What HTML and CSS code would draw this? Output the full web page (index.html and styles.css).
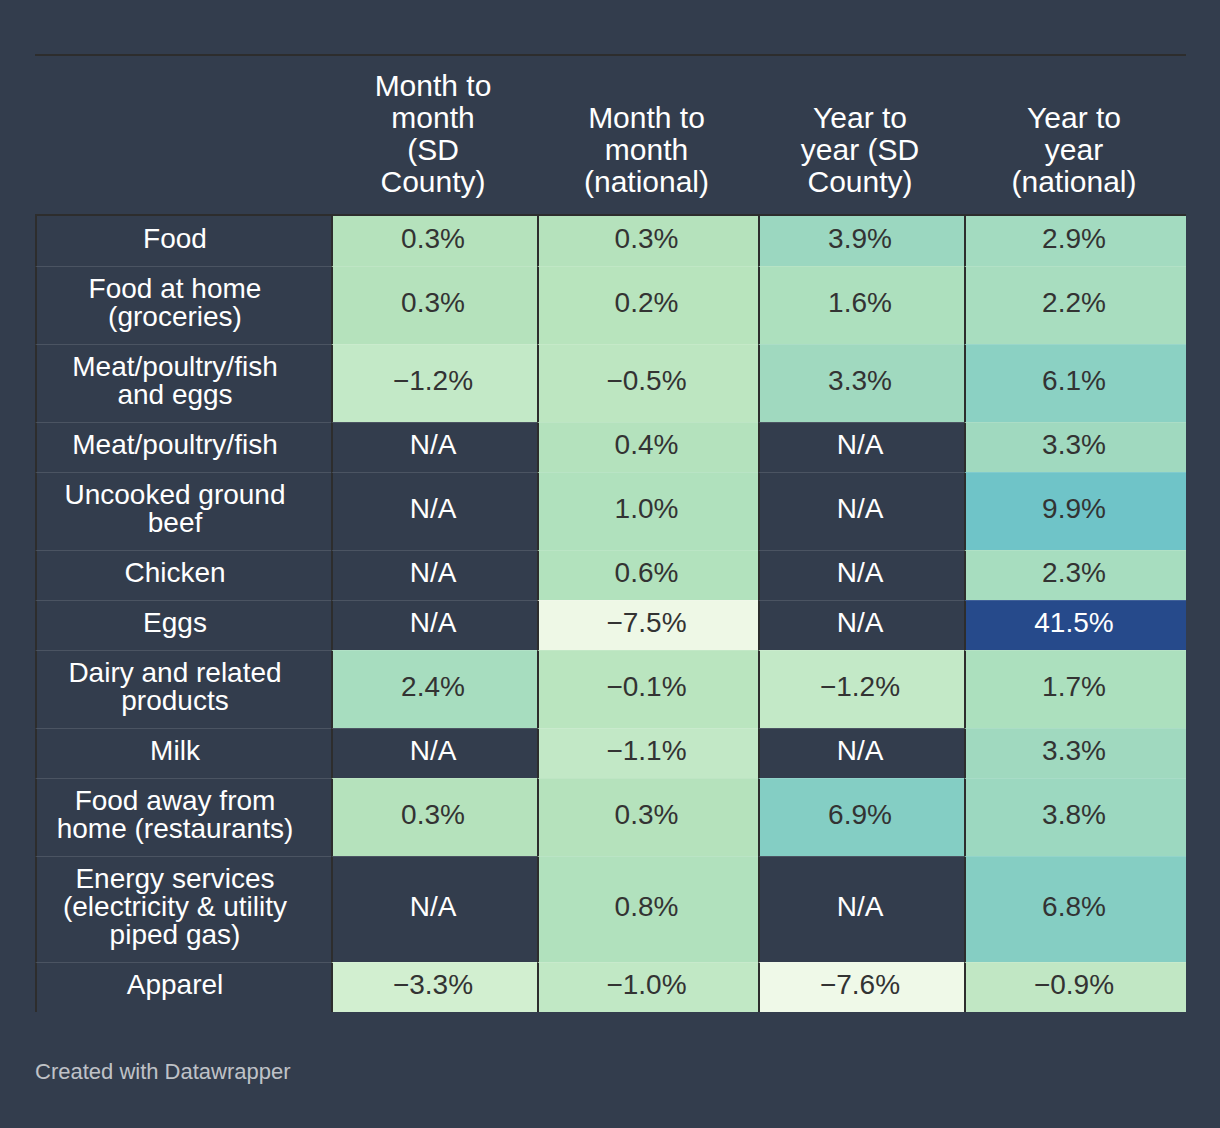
FILE: index.html
```html
<!DOCTYPE html>
<html lang="en">
<head>
<meta charset="utf-8">
<title>Price changes</title>
<link rel="stylesheet" href="styles.css">
</head>
<body>
<div class="chart">
  <div class="grid">
    <div class="row head">
      <div class="hcell"></div>
      <div class="hcell">Month to month (SD County)</div>
      <div class="hcell">Month to month (national)</div>
      <div class="hcell">Year to year (SD County)</div>
      <div class="hcell">Year to year (national)</div>
    </div>
    <div class="row first">
      <div class="cell label">Food</div>
      <div class="cell" style="background-color:#b5e2bc">0.3%</div>
      <div class="cell" style="background-color:#b5e2bc">0.3%</div>
      <div class="cell" style="background-color:#9bd7c0">3.9%</div>
      <div class="cell" style="background-color:#a3dbc0">2.9%</div>
    </div>
    <div class="row">
      <div class="cell label">Food at home (groceries)</div>
      <div class="cell" style="background-color:#b5e2bc">0.3%</div>
      <div class="cell" style="background-color:#b8e4bd">0.2%</div>
      <div class="cell" style="background-color:#ade0be">1.6%</div>
      <div class="cell" style="background-color:#a8ddbf">2.2%</div>
    </div>
    <div class="row">
      <div class="cell label">Meat/poultry/fish and eggs</div>
      <div class="cell" style="background-color:#c3e9c7">−1.2%</div>
      <div class="cell" style="background-color:#bde6c1">−0.5%</div>
      <div class="cell" style="background-color:#a0d9bf">3.3%</div>
      <div class="cell" style="background-color:#8bd1c3">6.1%</div>
    </div>
    <div class="row">
      <div class="cell label">Meat/poultry/fish</div>
      <div class="cell na">N/A</div>
      <div class="cell" style="background-color:#b4e2bd">0.4%</div>
      <div class="cell na">N/A</div>
      <div class="cell" style="background-color:#a0d9bf">3.3%</div>
    </div>
    <div class="row">
      <div class="cell label">Uncooked ground beef</div>
      <div class="cell na">N/A</div>
      <div class="cell" style="background-color:#b0e1bd">1.0%</div>
      <div class="cell na">N/A</div>
      <div class="cell" style="background-color:#6fc4c8">9.9%</div>
    </div>
    <div class="row">
      <div class="cell label">Chicken</div>
      <div class="cell na">N/A</div>
      <div class="cell" style="background-color:#b2e2bd">0.6%</div>
      <div class="cell na">N/A</div>
      <div class="cell" style="background-color:#a7ddbf">2.3%</div>
    </div>
    <div class="row">
      <div class="cell label">Eggs</div>
      <div class="cell na">N/A</div>
      <div class="cell" style="background-color:#eef8e6">−7.5%</div>
      <div class="cell na">N/A</div>
      <div class="cell inv" style="background-color:#264a8b">41.5%</div>
    </div>
    <div class="row">
      <div class="cell label">Dairy and related products</div>
      <div class="cell" style="background-color:#a7ddbf">2.4%</div>
      <div class="cell" style="background-color:#bae5bf">−0.1%</div>
      <div class="cell" style="background-color:#c3e9c7">−1.2%</div>
      <div class="cell" style="background-color:#ace0be">1.7%</div>
    </div>
    <div class="row">
      <div class="cell label">Milk</div>
      <div class="cell na">N/A</div>
      <div class="cell" style="background-color:#c2e8c6">−1.1%</div>
      <div class="cell na">N/A</div>
      <div class="cell" style="background-color:#a0d9bf">3.3%</div>
    </div>
    <div class="row">
      <div class="cell label">Food away from home (restaurants)</div>
      <div class="cell" style="background-color:#b5e2bc">0.3%</div>
      <div class="cell" style="background-color:#b5e2bc">0.3%</div>
      <div class="cell" style="background-color:#84cec4">6.9%</div>
      <div class="cell" style="background-color:#9cd8c0">3.8%</div>
    </div>
    <div class="row">
      <div class="cell label">Energy services (electricity &amp; utility piped gas)</div>
      <div class="cell na">N/A</div>
      <div class="cell" style="background-color:#b1e1bd">0.8%</div>
      <div class="cell na">N/A</div>
      <div class="cell" style="background-color:#85cec3">6.8%</div>
    </div>
    <div class="row">
      <div class="cell label">Apparel</div>
      <div class="cell" style="background-color:#d2efd0">−3.3%</div>
      <div class="cell" style="background-color:#c1e8c5">−1.0%</div>
      <div class="cell" style="background-color:#eff9e8">−7.6%</div>
      <div class="cell" style="background-color:#c1e7c4">−0.9%</div>
    </div>
  </div>
  <div class="footer">Created with Datawrapper</div>
</div>
</body>
</html>
```
FILE: styles.css
```css
html, body {
  margin: 0;
  padding: 0;
}

body {
  background: #333d4d;
  font-family: "Liberation Sans", Arial, Helvetica, sans-serif;
}

.chart {
  box-sizing: border-box;
  width: 1220px;
  height: 1128px;
  padding: 54px 34px 0 35px;
}

.grid {
  display: grid;
  grid-template-columns: 296px 206px 221px 206px 222px;
  border-top: 2px solid #2d2d2d;
}

.row {
  display: contents;
}

.hcell {
  display: flex;
  align-items: flex-end;
  justify-content: center;
  text-align: center;
  padding: 14px 37px 16px 35px;
  font-size: 30px;
  line-height: 32px;
  color: #ffffff;
  border-bottom: 2px solid #2d2d2d;
}

.cell {
  display: flex;
  align-items: center;
  justify-content: center;
  text-align: center;
  padding: 8px 12px 13px 8px;
  font-size: 28px;
  line-height: 28px;
  color: #333333;
  border-top: 1px solid rgba(255, 255, 255, 0.12);
  border-left: 2px solid #2d2d2d;
}

.row.first .cell {
  border-top: 0;
  padding-top: 9px;
}

.label {
  color: #ffffff;
  padding-left: 10px;
  padding-right: 28px;
}

.na,
.inv {
  color: #ffffff;
}

.footer {
  margin-top: 49px;
  font-size: 22px;
  line-height: 22px;
  color: rgba(255, 255, 255, 0.7);
}
```
